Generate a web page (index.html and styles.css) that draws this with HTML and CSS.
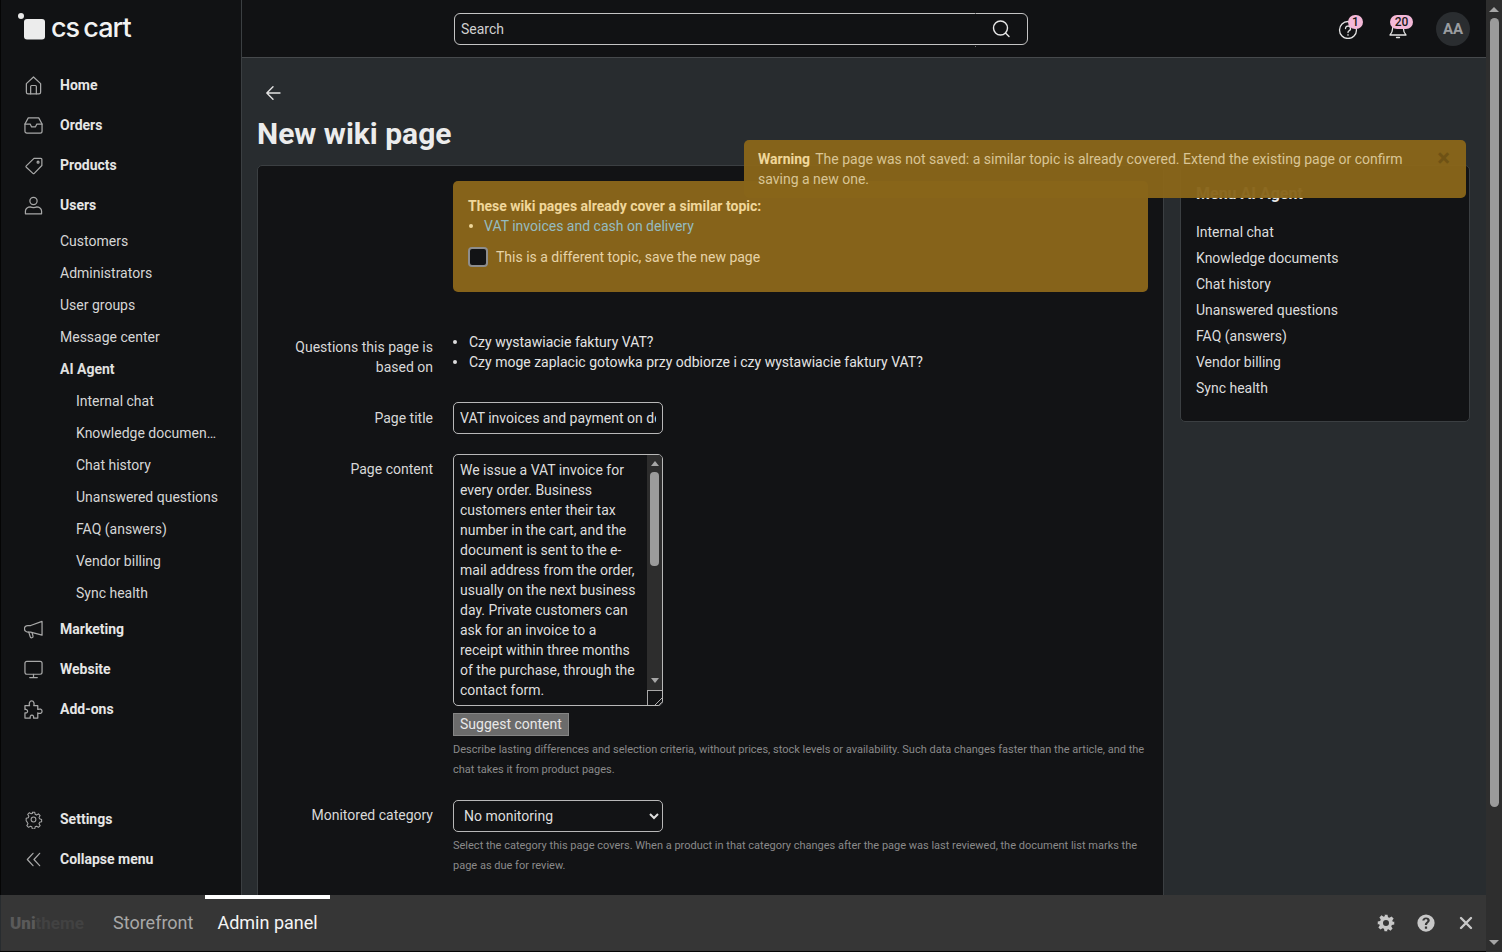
FILE: index.html
```html
<!DOCTYPE html>
<html lang="en">
<head>
<meta charset="utf-8">
<title>New wiki page</title>
<link rel="stylesheet" href="styles.css">
</head>
<body>
<div class="app">
  <aside class="sidebar">
    <div class="logo">
      <svg class="logo-mark" width="30" height="30" viewBox="0 0 30 30"><circle cx="3" cy="3" r="3" fill="#e8e8e8"/><rect x="6" y="6" width="21" height="20.500" rx="3" fill="#ececec"/></svg>
      <span class="logo-text">cs cart</span>
    </div>
    <nav class="nav">
      <a class="nav-main"><svg class="ico" viewBox="0 0 20 20"><path d="M2.500 8 10 1l7.500 7v9a1.800 1.800 0 0 1-1.800 1.800H4.300A1.800 1.800 0 0 1 2.500 17z"/><path d="M7 18.800V11a1 1 0 0 1 1-1h4a1 1 0 0 1 1 1v7.800"/></svg>Home</a>
      <a class="nav-main"><svg class="ico" viewBox="0 0 20 20"><path d="M4.500 2h11l3.500 6.500V16a2 2 0 0 1-2 2H3a2 2 0 0 1-2-2V8.500z"/><path d="M1 8.500h5.500l1.500 3h4l1.500-3H19"/></svg>Orders</a>
      <a class="nav-main"><svg class="ico" viewBox="0 0 20 20"><path d="M10.500 2.500h7.300a1 1 0 0 1 1 1V10l-8 8.300a1 1 0 0 1-1.400 0l-7-6.500a1 1 0 0 1 0-1.400z"/><circle cx="14.800" cy="6.500" r="1"/></svg>Products</a>
      <a class="nav-main"><svg class="ico" viewBox="0 0 20 20"><circle cx="10" cy="5.200" r="3.800"/><path d="M1.500 18.800v-3c0-2.800 2.800-4.300 5-4.300 1 .5 2 .8 3.500 .8s2.500-.3 3.500-.8c2.200 0 5 1.500 5 4.300v3z"/></svg>Users</a>
      <a class="nav-sub">Customers</a>
      <a class="nav-sub">Administrators</a>
      <a class="nav-sub">User groups</a>
      <a class="nav-sub">Message center</a>
      <a class="nav-sub active">AI Agent</a>
      <a class="nav-sub deep">Internal chat</a>
      <a class="nav-sub deep">Knowledge documen&hellip;</a>
      <a class="nav-sub deep">Chat history</a>
      <a class="nav-sub deep">Unanswered questions</a>
      <a class="nav-sub deep">FAQ (answers)</a>
      <a class="nav-sub deep">Vendor billing</a>
      <a class="nav-sub deep">Sync health</a>
      <a class="nav-main"><svg class="ico" viewBox="0 0 20 20"><path d="M19 1.500v14.500L7 12.800H4a3.500 3.500 0 0 1 0-7h3z"/><path d="M5 12.800l1.500 4.700a1.500 1.500 0 0 0 3-.6L8.600 13.700"/></svg>Marketing</a>
      <a class="nav-main"><svg class="ico" viewBox="0 0 20 20"><rect x="1" y="1.500" width="18" height="13.500" rx="2"/><path d="M10 15v3.500M6 18.500h8"/></svg>Website</a>
      <a class="nav-main"><svg class="ico" viewBox="0 0 20 20"><path d="M1 6h4.800c-.8-2.500 0-5 2.300-5s3 2.500 2.200 5H14.500v4c2-1 4.500-.5 4.500 1.800s-2.500 3-4.500 1.800V19H10c.6-1.800-.3-3-1.700-3s-2.200 1.200-1.700 3H1v-5.500c1.500 .5 2.800-.4 2.800-1.600S2.500 9.500 1 10z"/></svg>Add-ons</a>
    </nav>
    <nav class="nav nav-bottom">
      <a class="nav-main"><svg class="ico" viewBox="0 0 20 20"><g transform="translate(10 10) scale(.84) translate(-10 -10)"><circle cx="10" cy="10" r="3"/><path d="M8.500 .8h3l.6 2.700 1.700 .8 2.400-1.400 2.100 2.200-1.400 2.300 .7 1.800 2.600 .7v3l-2.600 .7-.7 1.800 1.400 2.300-2.100 2.100-2.400-1.400-1.700 .8-.6 2.600h-3l-.6-2.600-1.800-.8-2.300 1.400-2.100-2.100 1.400-2.300-.8-1.800L.8 11.500v-3l2.600-.7 .8-1.800L2.800 3.700 4.900 1.500 7.200 2.900l1.700-.7z"/></g></svg>Settings</a>
      <a class="nav-main"><svg class="ico" viewBox="0 0 20 20"><path d="M9.500 3.500 3.500 10l6 6.500M16.500 3.500 10.500 10l6 6.500"/></svg>Collapse menu</a>
    </nav>
  </aside>
  <div class="main">
    <header class="topbar">
      <div class="search">
        <span class="search-label">Search</span>
        <svg class="search-ico" width="20" height="20" viewBox="0 0 20 20"><circle cx="9.500" cy="9" r="7"/><path d="m14.500 14 3.500 3.500"/></svg>
      </div>
      <div class="top-actions">
        <span class="top-ico">
          <svg width="20" height="20" viewBox="0 0 20 20"><circle cx="10" cy="11" r="8.500"/><path d="M7.500 9.500a2.500 2.500 0 1 1 3.500 2.300c-.7 .4-1 1-1 1.700M10 15.700v.5"/></svg>
          <span class="badge">1</span>
        </span>
        <span class="top-ico bell">
          <svg width="20" height="20" viewBox="0 0 20 20"><path d="M2 16c1.500-1.500 2.500-3 2.500-6a5.500 5.500 0 0 1 11 0c0 3 1 4.500 2.500 6z"/><path d="M8.500 18.500h3"/></svg>
          <span class="badge">20</span>
        </span>
        <span class="avatar">AA</span>
      </div>
    </header>
    <div class="content">
      <div class="back"><svg width="16" height="16" viewBox="0 0 16 16"><path d="M15 8H2M8 1.800 1.800 8 8 14.200"/></svg></div>
      <h1 class="title">New wiki page</h1>
      <div class="columns">
        <section class="card">
          <div class="dup-alert">
            <strong>These wiki pages already cover a similar topic:</strong>
            <ul class="dup-list"><li><a>VAT invoices and cash on delivery</a></li></ul>
            <label class="dup-check"><input type="checkbox"><span>This is a different topic, save the new page</span></label>
          </div>
          <div class="row row-questions">
            <div class="label">Questions this page is based on</div>
            <ul class="q-list">
              <li>Czy wystawiacie faktury VAT?</li>
              <li>Czy moge zaplacic gotowka przy odbiorze i czy wystawiacie faktury VAT?</li>
            </ul>
          </div>
          <div class="row row-title">
            <div class="label">Page title</div>
            <input class="field" type="text" value="VAT invoices and payment on delivery">
          </div>
          <div class="row row-content">
            <div class="label">Page content</div>
            <div class="control">
              <div class="area-wrap">
                <textarea class="field area">We issue a VAT invoice for every order. Business customers enter their tax number in the cart, and the document is sent to the e-mail address from the order, usually on the next business day. Private customers can ask for an invoice to a receipt within three months of the purchase, through the contact form.

A company invoice needs the full company name, address and tax number. Check them before you pay, because the document is issued from the data in the order.</textarea>
                <div class="area-scroll">
                  <span class="tri-up"></span>
                  <span class="area-thumb"></span>
                  <span class="tri-down"></span>
                  <span class="area-corner"></span>
                </div>
              </div>
              <button class="suggest" type="button">Suggest content</button>
              <p class="help">Describe lasting differences and selection criteria, without prices, stock levels or availability. Such data changes faster than the article, and the chat takes it from product pages.</p>
            </div>
          </div>
          <div class="row row-category">
            <div class="label">Monitored category</div>
            <div class="control">
              <select class="field select"><option>No monitoring</option></select>
              <p class="help">Select the category this page covers. When a product in that category changes after the page was last reviewed, the document list marks the page as due for review.</p>
            </div>
          </div>
        </section>
        <aside class="side-menu">
          <h3 class="side-title">Menu AI Agent</h3>
          <a>Internal chat</a>
          <a>Knowledge documents</a>
          <a>Chat history</a>
          <a>Unanswered questions</a>
          <a>FAQ (answers)</a>
          <a>Vendor billing</a>
          <a>Sync health</a>
        </aside>
      </div>
    </div>
  </div>
</div>
<div class="rail">
  <span class="tri-up"></span>
  <span class="rail-thumb"></span>
  <span class="tri-down"></span>
</div>
<div class="toast"><span class="toast-close">&times;</span><strong>Warning</strong> The page was not saved: a similar topic is already covered. Extend the existing page or confirm saving a new one.</div>
<footer class="devbar">
  <span class="brand"><b>Uni</b><i>theme</i></span>
  <a class="tab">Storefront</a>
  <a class="tab current">Admin panel</a>
  <span class="dev-icons">
    <svg width="18" height="18" viewBox="0 0 24 24"><path fill-rule="evenodd" d="M10 1h4l.7 3.200 1.900 .8 2.800-1.800 2.800 2.800-1.800 2.800 .8 1.900L23 10v4l-3.200 .7-.8 1.900 1.800 2.800-2.800 2.800-2.800-1.800-1.900 .8L14 23h-4l-.7-3.200-1.900-.8-2.800 1.800-2.800-2.800 1.800-2.800-.8-1.900L1 14v-4l3.200-.7 .8-1.900L3.200 4.600 6 1.800l2.800 1.800 1.900-.8zM12 8a4 4 0 1 0 0 8 4 4 0 0 0 0-8z"/></svg>
    <svg width="18" height="18" viewBox="0 0 24 24"><path fill-rule="evenodd" d="M12 .5a11.500 11.500 0 1 1 0 23 11.500 11.500 0 0 1 0-23zM10.500 16.500v3h3v-3zM12 4.500c-3 0-4.800 1.700-5 4.300h3c.1-1 .8-1.700 2-1.700s1.900 .6 1.900 1.500c0 2-3.400 2.200-3.400 6h3c0-2.700 3.500-3 3.500-6.200 0-2.400-2-3.900-5-3.900z"/></svg>
    <svg class="dev-x" width="16" height="16" viewBox="0 0 16 16"><path class="x" d="M3 3l10 10M13 3 3 13"/></svg>
  </span>
</footer>
</body>
</html>
```
FILE: styles.css
```css
html { color-scheme: dark; background: #050505; overflow: hidden; }
* { box-sizing: border-box; }
body { margin: 0; width: 1502px; height: 952px; overflow: hidden; position: relative; display: flex; font: 14px/20px Roboto, "Liberation Sans", sans-serif; color: #e4e4e4; background: #050505; }
a { color: inherit; text-decoration: none; }

.app { display: flex; width: 1486px; height: 951px; flex: none; overflow: hidden; background: #282c2f; }

.rail { width: 16px; height: 952px; flex: none; background: #2e2e2e; display: flex; flex-direction: column; align-items: center; padding: 7px 0; }
.rail-thumb { width: 9px; height: 789px; margin-top: 6px; border-radius: 5px; background: #9b9b9b; }
.rail .tri-down { margin-top: auto; }
.tri-up, .tri-down { display: block; width: 0; height: 0; border-left: 5px solid transparent; border-right: 5px solid transparent; flex: none; }
.tri-up { border-bottom: 5px solid #a6a6a6; }
.tri-down { border-top: 5px solid #a6a6a6; }

.sidebar { width: 242px; height: 895px; flex: none; background: #111214; border-right: 1px solid #3b3f42; border-left: 1px solid #050505; display: flex; flex-direction: column; }
.logo { height: 57px; padding: 13px 0 0 17px; display: flex; align-items: flex-start; }
.logo-text { font: 500 27px/30px Inter, sans-serif; color: #f2f2f2; letter-spacing: -1px; word-spacing: -2px; margin-left: 3px; }
.nav { display: flex; flex-direction: column; padding-top: 8px; }
.nav-main { height: 40px; display: flex; align-items: center; padding-left: 23px; font-weight: 700; color: #e6e6e6; }
.ico { width: 19px; height: 19px; margin-right: 17px; fill: none; stroke: #a8a8a8; stroke-width: 1.300; stroke-linejoin: round; stroke-linecap: round; flex: none; }
.nav-sub { height: 32px; display: flex; align-items: center; padding-left: 59px; color: #d6d6d6; }
.nav-sub.active { font-weight: 700; color: #e0e0e0; }
.nav-sub.deep { padding-left: 75px; }
.nav-bottom { margin-top: auto; padding: 0 0 16px; }

.main { flex: 1; min-width: 0; display: flex; flex-direction: column; }
.topbar { height: 58px; flex: none; background: #111214; border-bottom: 1px solid #46494c; display: flex; align-items: flex-start; padding: 13px 16px 0 212px; }
.search { width: 574px; height: 32px; border: 1px solid #c4c4c4; border-radius: 6px; display: flex; align-items: center; justify-content: space-between; padding: 0 16px 0 6px; color: #d0d0d0; position: relative; }
.search::after { content: ""; position: absolute; left: 520px; top: -1px; width: 1px; height: 32px; border-top: 1px solid #6f6f6f; border-bottom: 1px solid #6f6f6f; }
.search-ico { fill: none; stroke: #e8e8e8; stroke-width: 1.400; stroke-linecap: round; }
.top-actions { margin-left: auto; display: flex; align-items: center; gap: 30px; margin-top: -1px; }
.top-ico { position: relative; width: 20px; height: 20px; }
.top-ico svg { fill: none; stroke: #e4e4e4; stroke-width: 1.300; stroke-linecap: round; stroke-linejoin: round; display: block; }
.badge { position: absolute; top: -4px; left: 10px; min-width: 15px; height: 14px; padding: 0 3px; background: #f4b8d8; color: #1a1a1a; border-radius: 7px; font-size: 12px; font-weight: 500; line-height: 14px; text-align: center; }
.bell .badge { left: 2px; min-width: 23px; }
.avatar { width: 34px; height: 34px; margin-left: -2px; border-radius: 50%; background: #2a2d30; color: #9a9da0; font-weight: 700; font-size: 15px; display: flex; align-items: center; justify-content: center; }

.content { flex: 1; padding: 0 16px 0 15px; }
.back { height: 50px; padding: 27px 0 0 8px; }
.back svg { display: block; fill: none; stroke: #e4e4e4; stroke-width: 1.400; stroke-linecap: round; stroke-linejoin: round; }
.title { margin: 0; font-size: 30px; line-height: 36px; font-weight: 700; color: #ececec; padding-top: 8px; height: 57px; }
.columns { display: flex; gap: 16px; align-items: flex-start; }
.card { width: 907px; height: 943px; flex: none; background: #121315; border: 1px solid #3b3f42; border-radius: 5px; padding: 15px 15px 0 0; }
.dup-alert { margin-left: 195px; width: 695px; height: 111px; background: #86631a; border-radius: 5px; padding: 15px; color: #e6d3a8; }
.dup-alert strong { display: block; color: #f0d79a; }
.dup-list { margin: 0; padding: 0 0 0 16px; list-style: none; }
.dup-list li { position: relative; }
.dup-list li::before { content: ""; position: absolute; left: -15px; top: 8px; width: 4px; height: 4px; border-radius: 50%; background: #f0d79a; }
.dup-list a { color: #95bcc0; }
.dup-check { display: flex; align-items: center; gap: 8px; margin-top: 11px; }
.dup-check input { appearance: none; margin: 0; width: 20px; height: 20px; border: 2px solid #8d8d8d; border-radius: 4px; background: #121315; flex: none; }

.row { display: flex; align-items: flex-start; }
.label { width: 175px; margin-right: 20px; text-align: right; color: #d8d8d8; flex: none; }
.row-questions { margin-top: 45px; }
.q-list { margin: -5px 0 0; padding: 0 0 0 16px; list-style: none; }
.q-list li { position: relative; }
.q-list li::before { content: ""; position: absolute; left: -16px; top: 8px; width: 4px; height: 4px; border-radius: 50%; background: #dcdcdc; }
.row-title { margin-top: 25px; }
.row-title .label { padding-top: 6px; }
.field { background: #121315; border: 1px solid #b8b8b8; border-radius: 5px; font: 14px/20px Roboto, sans-serif; color: #dedede; width: 210px; }
input.field { height: 32px; padding: 0 6px; }
.row-content { margin-top: 20px; }
.row-content .label { padding-top: 5px; }
.control { width: 695px; flex: none; }
.area-wrap { position: relative; width: 210px; height: 252px; }
.area { display: block; height: 252px; padding: 5px 21px 5px 6px; resize: none; overflow: hidden; }
.area-scroll { position: absolute; top: 1px; right: 1px; bottom: 1px; width: 15px; background: #2d2d2d; border-radius: 0 4px 4px 0; overflow: hidden; display: flex; flex-direction: column; align-items: center; padding-top: 6px; }
.area-scroll .tri-up, .area-scroll .tri-down { border-left-width: 4px; border-right-width: 4px; }
.area-thumb { width: 9px; height: 94px; margin-top: 6px; border-radius: 4px; background: #9b9b9b; }
.area-scroll .tri-down { margin-top: 112px; }
.area-corner { position: absolute; left: 0; right: 0; bottom: 0; height: 15px; background: linear-gradient(135deg, #121315 72%, #b0b0b0 72%, #b0b0b0 76%, #121315 76%, #121315 86%, #b0b0b0 86%, #b0b0b0 90%, #121315 90%); border: 1px solid #a8a8a8; border-width: 1px 0 0 1px; }
.suggest { display: block; margin-top: 7px; height: 23px; padding: 0 6px 2px; font: 14px/20px Roboto, sans-serif; color: #e8e8e8; background: #6b6b6b; border: 1px solid #858585; border-radius: 0; }
.help { margin: 4px 0 0; font-size: 11px; line-height: 20px; color: #8a8a8a; }
.row-category { margin-top: 20px; }
.row-category .label { padding-top: 5px; }
select.field { height: 32px; padding: 0 6px; display: block; }

.side-menu { width: 290px; height: 257px; flex: none; background: #121315; border: 1px solid #3b3f42; border-radius: 5px; padding: 18px 15px 0; display: flex; flex-direction: column; }
.side-title { margin: 0 0 15px; font-size: 16px; line-height: 20px; font-weight: 700; color: #e6e6e6; }
.side-menu a { height: 26px; line-height: 26px; color: #dcdcdc; }

.toast { position: absolute; left: 744px; top: 140px; width: 722px; height: 58px; padding: 9px 50px 0 14px; background: rgba(136, 101, 26, .97); border-radius: 5px; color: #d9c595; }
.toast strong { color: #f0d79a; margin-right: 2px; }
.toast-close { position: absolute; right: 16px; top: 6px; font-size: 24px; line-height: 24px; color: #6f5214; font-weight: 700; }

.devbar { position: absolute; left: 1px; right: 16px; bottom: 1px; height: 56px; background: #363636; display: flex; align-items: center; }
.brand { width: 100px; padding-left: 9px; font-size: 17px; color: #4d4d4d; }
.brand b { font-weight: 900; color: #5a5a5a; }
.brand i { font-style: normal; font-weight: 700; color: #424242; }
.tab { height: 56px; padding: 0 12px; font-size: 18px; line-height: 48px; color: #a8a8a8; border-top: 4px solid transparent; }
.tab.current { color: #f4f4f4; border-top-color: #fff; }
.dev-icons { margin-left: auto; display: flex; align-items: center; gap: 22px; padding-right: 12px; fill: #c8c8c8; }
.dev-x { margin-left: 1px; }
.x { fill: none; stroke: #c8c8c8; stroke-width: 2.400; stroke-linecap: round; }
```
